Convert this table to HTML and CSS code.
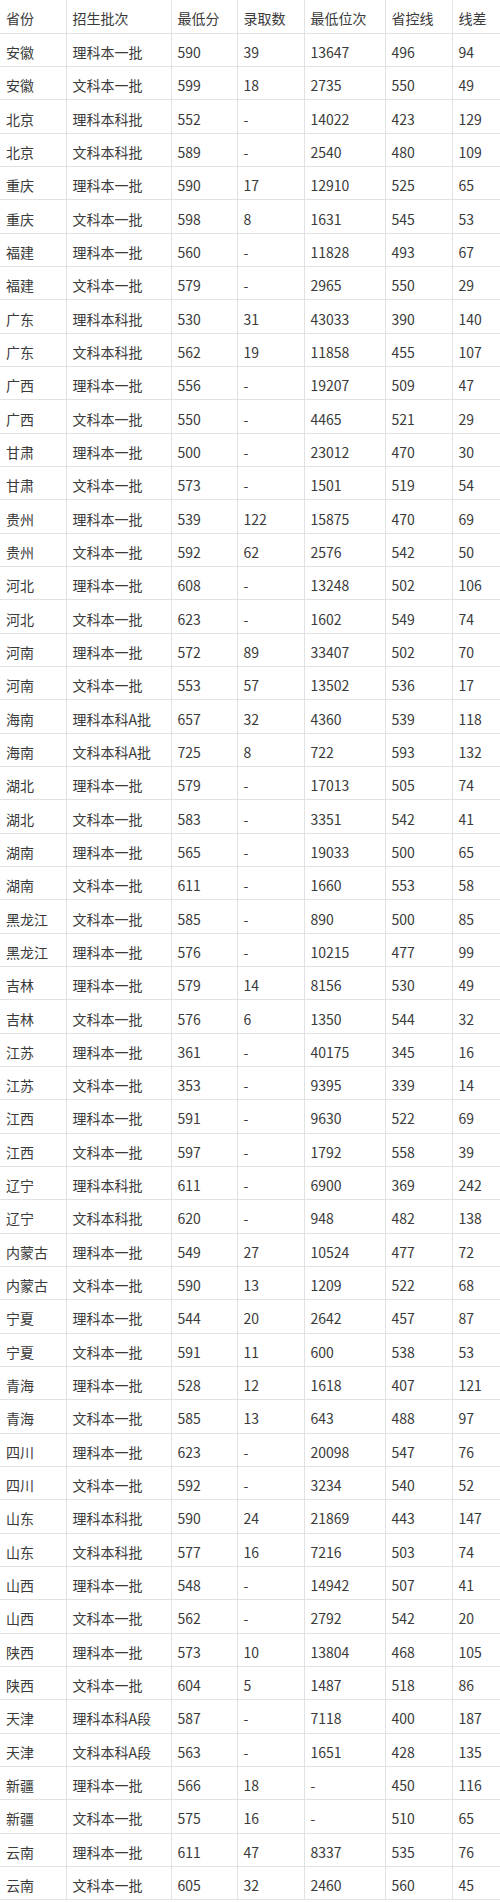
FILE: index.html
```html
<!DOCTYPE html>
<html lang="zh-CN">
<head>
<meta charset="utf-8">
<title>录取分数</title>
<link rel="stylesheet" href="styles.css">
</head>
<body>
<table class="score-table">
<colgroup>
<col class="c1"><col class="c2"><col class="c3"><col class="c4"><col class="c5"><col class="c6"><col class="c7">
</colgroup>
<thead>
<tr><th>省份</th><th>招生批次</th><th>最低分</th><th>录取数</th><th>最低位次</th><th>省控线</th><th>线差</th></tr>
</thead>
<tbody>
<tr><td>安徽</td><td>理科本一批</td><td>590</td><td>39</td><td>13647</td><td>496</td><td>94</td></tr>
<tr><td>安徽</td><td>文科本一批</td><td>599</td><td>18</td><td>2735</td><td>550</td><td>49</td></tr>
<tr><td>北京</td><td>理科本科批</td><td>552</td><td>-</td><td>14022</td><td>423</td><td>129</td></tr>
<tr><td>北京</td><td>文科本科批</td><td>589</td><td>-</td><td>2540</td><td>480</td><td>109</td></tr>
<tr><td>重庆</td><td>理科本一批</td><td>590</td><td>17</td><td>12910</td><td>525</td><td>65</td></tr>
<tr><td>重庆</td><td>文科本一批</td><td>598</td><td>8</td><td>1631</td><td>545</td><td>53</td></tr>
<tr><td>福建</td><td>理科本一批</td><td>560</td><td>-</td><td>11828</td><td>493</td><td>67</td></tr>
<tr><td>福建</td><td>文科本一批</td><td>579</td><td>-</td><td>2965</td><td>550</td><td>29</td></tr>
<tr><td>广东</td><td>理科本科批</td><td>530</td><td>31</td><td>43033</td><td>390</td><td>140</td></tr>
<tr><td>广东</td><td>文科本科批</td><td>562</td><td>19</td><td>11858</td><td>455</td><td>107</td></tr>
<tr><td>广西</td><td>理科本一批</td><td>556</td><td>-</td><td>19207</td><td>509</td><td>47</td></tr>
<tr><td>广西</td><td>文科本一批</td><td>550</td><td>-</td><td>4465</td><td>521</td><td>29</td></tr>
<tr><td>甘肃</td><td>理科本一批</td><td>500</td><td>-</td><td>23012</td><td>470</td><td>30</td></tr>
<tr><td>甘肃</td><td>文科本一批</td><td>573</td><td>-</td><td>1501</td><td>519</td><td>54</td></tr>
<tr><td>贵州</td><td>理科本一批</td><td>539</td><td>122</td><td>15875</td><td>470</td><td>69</td></tr>
<tr><td>贵州</td><td>文科本一批</td><td>592</td><td>62</td><td>2576</td><td>542</td><td>50</td></tr>
<tr><td>河北</td><td>理科本一批</td><td>608</td><td>-</td><td>13248</td><td>502</td><td>106</td></tr>
<tr><td>河北</td><td>文科本一批</td><td>623</td><td>-</td><td>1602</td><td>549</td><td>74</td></tr>
<tr><td>河南</td><td>理科本一批</td><td>572</td><td>89</td><td>33407</td><td>502</td><td>70</td></tr>
<tr><td>河南</td><td>文科本一批</td><td>553</td><td>57</td><td>13502</td><td>536</td><td>17</td></tr>
<tr><td>海南</td><td>理科本科A批</td><td>657</td><td>32</td><td>4360</td><td>539</td><td>118</td></tr>
<tr><td>海南</td><td>文科本科A批</td><td>725</td><td>8</td><td>722</td><td>593</td><td>132</td></tr>
<tr><td>湖北</td><td>理科本一批</td><td>579</td><td>-</td><td>17013</td><td>505</td><td>74</td></tr>
<tr><td>湖北</td><td>文科本一批</td><td>583</td><td>-</td><td>3351</td><td>542</td><td>41</td></tr>
<tr><td>湖南</td><td>理科本一批</td><td>565</td><td>-</td><td>19033</td><td>500</td><td>65</td></tr>
<tr><td>湖南</td><td>文科本一批</td><td>611</td><td>-</td><td>1660</td><td>553</td><td>58</td></tr>
<tr><td>黑龙江</td><td>文科本一批</td><td>585</td><td>-</td><td>890</td><td>500</td><td>85</td></tr>
<tr><td>黑龙江</td><td>理科本一批</td><td>576</td><td>-</td><td>10215</td><td>477</td><td>99</td></tr>
<tr><td>吉林</td><td>理科本一批</td><td>579</td><td>14</td><td>8156</td><td>530</td><td>49</td></tr>
<tr><td>吉林</td><td>文科本一批</td><td>576</td><td>6</td><td>1350</td><td>544</td><td>32</td></tr>
<tr><td>江苏</td><td>理科本一批</td><td>361</td><td>-</td><td>40175</td><td>345</td><td>16</td></tr>
<tr><td>江苏</td><td>文科本一批</td><td>353</td><td>-</td><td>9395</td><td>339</td><td>14</td></tr>
<tr><td>江西</td><td>理科本一批</td><td>591</td><td>-</td><td>9630</td><td>522</td><td>69</td></tr>
<tr><td>江西</td><td>文科本一批</td><td>597</td><td>-</td><td>1792</td><td>558</td><td>39</td></tr>
<tr><td>辽宁</td><td>理科本科批</td><td>611</td><td>-</td><td>6900</td><td>369</td><td>242</td></tr>
<tr><td>辽宁</td><td>文科本科批</td><td>620</td><td>-</td><td>948</td><td>482</td><td>138</td></tr>
<tr><td>内蒙古</td><td>理科本一批</td><td>549</td><td>27</td><td>10524</td><td>477</td><td>72</td></tr>
<tr><td>内蒙古</td><td>文科本一批</td><td>590</td><td>13</td><td>1209</td><td>522</td><td>68</td></tr>
<tr><td>宁夏</td><td>理科本一批</td><td>544</td><td>20</td><td>2642</td><td>457</td><td>87</td></tr>
<tr><td>宁夏</td><td>文科本一批</td><td>591</td><td>11</td><td>600</td><td>538</td><td>53</td></tr>
<tr><td>青海</td><td>理科本一批</td><td>528</td><td>12</td><td>1618</td><td>407</td><td>121</td></tr>
<tr><td>青海</td><td>文科本一批</td><td>585</td><td>13</td><td>643</td><td>488</td><td>97</td></tr>
<tr><td>四川</td><td>理科本一批</td><td>623</td><td>-</td><td>20098</td><td>547</td><td>76</td></tr>
<tr><td>四川</td><td>文科本一批</td><td>592</td><td>-</td><td>3234</td><td>540</td><td>52</td></tr>
<tr><td>山东</td><td>理科本科批</td><td>590</td><td>24</td><td>21869</td><td>443</td><td>147</td></tr>
<tr><td>山东</td><td>文科本科批</td><td>577</td><td>16</td><td>7216</td><td>503</td><td>74</td></tr>
<tr><td>山西</td><td>理科本一批</td><td>548</td><td>-</td><td>14942</td><td>507</td><td>41</td></tr>
<tr><td>山西</td><td>文科本一批</td><td>562</td><td>-</td><td>2792</td><td>542</td><td>20</td></tr>
<tr><td>陕西</td><td>理科本一批</td><td>573</td><td>10</td><td>13804</td><td>468</td><td>105</td></tr>
<tr><td>陕西</td><td>文科本一批</td><td>604</td><td>5</td><td>1487</td><td>518</td><td>86</td></tr>
<tr><td>天津</td><td>理科本科A段</td><td>587</td><td>-</td><td>7118</td><td>400</td><td>187</td></tr>
<tr><td>天津</td><td>文科本科A段</td><td>563</td><td>-</td><td>1651</td><td>428</td><td>135</td></tr>
<tr><td>新疆</td><td>理科本一批</td><td>566</td><td>18</td><td>-</td><td>450</td><td>116</td></tr>
<tr><td>新疆</td><td>文科本一批</td><td>575</td><td>16</td><td>-</td><td>510</td><td>65</td></tr>
<tr><td>云南</td><td>理科本一批</td><td>611</td><td>47</td><td>8337</td><td>535</td><td>76</td></tr>
<tr><td>云南</td><td>文科本一批</td><td>605</td><td>32</td><td>2460</td><td>560</td><td>45</td></tr>
</tbody>
</table>
</body>
</html>
```

FILE: styles.css
```css
html, body {
  margin: 0;
  padding: 0;
  background: #ffffff;
}

.score-table {
  width: 500px;
  table-layout: fixed;
  border-collapse: collapse;
  font-family: "Noto Sans CJK SC", "Noto Sans", sans-serif;
  font-size: 14px;
  color: #3a3a3a;
}

.c1 { width: 66px; }
.c2 { width: 105px; }
.c3 { width: 66px; }
.c4 { width: 67px; }
.c5 { width: 81px; }
.c6 { width: 67px; }
.c7 { width: 48px; }

.score-table th,
.score-table td {
  height: 33.33px;
  padding: 4px 0 0 6px;
  box-sizing: border-box;
  text-align: left;
  font-weight: normal;
  white-space: nowrap;
  line-height: 20px;
  border-bottom: 1px solid #e2e2e2;
  border-left: 1px solid #e2e2e2;
}

.score-table th:first-child,
.score-table td:first-child {
  border-left: none;
}
```
